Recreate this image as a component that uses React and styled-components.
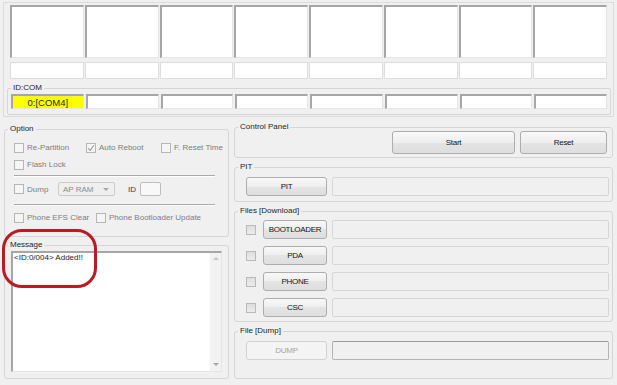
import React from "react";
import styled, { createGlobalStyle } from "styled-components";

const GlobalStyle = createGlobalStyle`
  html, body {
    margin: 0;
    padding: 0;
    background: #f0f0f0;
  }
  body {
    font-family: "Liberation Sans", Arial, sans-serif;
    font-size: 8px;
    color: #1b1b1b;
  }
`;

const slots = [0, 1, 2, 3, 4, 5, 6, 7];

const files = ["BOOTLOADER", "PDA", "PHONE", "CSC"];

const App = () => {
  return (
    <Window>
      <GlobalStyle />
      <DevicePanel>
        <LargeRow>
          {slots.map((i) => (
            <LargeBox key={i} />
          ))}
        </LargeRow>
        <SmallRow>
          {slots.map((i) => (
            <SmallBox key={i} />
          ))}
        </SmallRow>
        <ComGroup>
          <Caption>ID:COM</Caption>
          <ComRow>
            {slots.map((i) => (
              <ComBox key={i} $active={i === 0}>
                {i === 0 ? "0:[COM4]" : ""}
              </ComBox>
            ))}
          </ComRow>
        </ComGroup>
      </DevicePanel>

      <Main>
        <Column $top={7}>
          <Group>
            <Caption>Option</Caption>
            <OptionBody>
              <OptionGrid>
                <CheckItem>
                  <CheckBox />
                  Re-Partition
                </CheckItem>
                <CheckItem>
                  <CheckBox>
                    <svg width="8" height="8" viewBox="0 0 8 8">
                      <path
                        d="M1.2 4.3 L3.1 6.4 L6.9 1.2"
                        stroke="#9c9c9c"
                        strokeWidth="1.1"
                        fill="none"
                      />
                    </svg>
                  </CheckBox>
                  Auto Reboot
                </CheckItem>
                <CheckItem>
                  <CheckBox />
                  F. Reset Time
                </CheckItem>
                <CheckItem>
                  <CheckBox />
                  Flash Lock
                </CheckItem>
              </OptionGrid>
              <Separator $mt={4} />
              <DumpRow>
                <CheckItem $w={44}>
                  <CheckBox />
                  Dump
                </CheckItem>
                <Select>
                  AP RAM
                  <Arrow $dir="down" />
                </Select>
                <IdLabel>ID</IdLabel>
                <IdBox />
              </DumpRow>
              <Separator $mt={8} />
              <PhoneRow>
                <CheckItem $w={82}>
                  <CheckBox />
                  Phone EFS Clear
                </CheckItem>
                <CheckItem>
                  <CheckBox />
                  Phone Bootloader Update
                </CheckItem>
              </PhoneRow>
            </OptionBody>
          </Group>

          <Group $mt={3}>
            <Caption>Message</Caption>
            <GroupBody $pad="1px 6px 6px 6px">
              <MessageBox>
                <MessageText>&lt;ID:0/004&gt; Added!!</MessageText>
                <ScrollTrack>
                  <Arrow $dir="up" />
                  <Arrow $dir="down" />
                </ScrollTrack>
              </MessageBox>
            </GroupBody>
          </Group>
        </Column>

        <Column $top={5}>
          <Group>
            <Caption>Control Panel</Caption>
            <ControlBody>
              <Button $w={123} $h={23}>
                Start
              </Button>
              <Button $w={87} $h={23}>
                Reset
              </Button>
            </ControlBody>
          </Group>

          <Group $mt={4}>
            <Caption>PIT</Caption>
            <GroupBody $pad="5px 3px 5px 11px">
              <FileRow>
                <Button $w={81}>PIT</Button>
                <PathField />
              </FileRow>
            </GroupBody>
          </Group>

          <Group $mt={4}>
            <Caption>Files [Download]</Caption>
            <FileList>
              {files.map((name) => (
                <FileRow key={name}>
                  <FileCheck />
                  <Button $w={64}>{name}</Button>
                  <PathField />
                </FileRow>
              ))}
            </FileList>
          </Group>

          <Group $mt={4}>
            <Caption>File [Dump]</Caption>
            <GroupBody $pad="5px 3px 18px 11px">
              <FileRow>
                <Button $w={81} disabled>
                  DUMP
                </Button>
                <PathField $sunken />
              </FileRow>
            </GroupBody>
          </Group>
        </Column>
      </Main>

      <Highlight />
    </Window>
  );
};

export default App;

const Window = styled.div`
  position: relative;
  width: 617px;
  height: 385px;
  box-sizing: border-box;
  padding: 2px 3px 0;
  background: #f0f0f0;
  overflow: hidden;
`;

const DevicePanel = styled.div`
  border: 1px solid #dcdcdc;
  padding: 2px 6px 1px;
`;

const LargeRow = styled.div`
  display: grid;
  grid-template-columns: repeat(8, 1fr);
  column-gap: 1px;
  height: 53px;
`;

const sunken = `
  border-style: solid;
  border-width: 2px 1px 1px 2px;
  border-color: #a6a6a6 #e6e6e6 #e6e6e6 #a6a6a6;
  background: #fff;
`;

const LargeBox = styled.div`
  ${sunken}
`;

const SmallRow = styled.div`
  display: grid;
  grid-template-columns: repeat(8, 1fr);
  column-gap: 1px;
  height: 17px;
  margin-top: 4px;
`;

const SmallBox = styled.div`
  border: 1px solid #dedede;
  background: #fff;
`;

const Group = styled.fieldset`
  margin: ${(p) => p.$mt || 0}px 0 0;
  padding: 0;
  min-width: 0;
  border: 1px solid #d5d5d5;
  border-radius: 3px;
`;

const ComGroup = styled(Group)`
  margin: 4px -4px 0 -3px;
  border-radius: 2px;
`;

const Caption = styled.legend`
  margin-left: 3px;
  padding: 0 2px;
  font-size: 8px;
  line-height: 10px;
  color: #1e1e1e;
`;

const ComRow = styled.div`
  display: grid;
  grid-template-columns: repeat(8, 1fr);
  column-gap: 2px;
  padding: 1px 3px 5px;
`;

const ComBox = styled.div`
  ${sunken}
  height: 15px;
  box-sizing: border-box;
  background: ${(p) => (p.$active ? "#ffff00" : "#fff")};
  display: flex;
  align-items: center;
  justify-content: center;
  font-size: 9.5px;
  color: #2a2a1a;
`;

const Main = styled.div`
  display: grid;
  grid-template-columns: 225px 379px;
  column-gap: 5px;
  margin-left: 1px;
  align-items: start;
`;

const Column = styled.div`
  display: flex;
  flex-direction: column;
  padding-top: ${(p) => p.$top}px;
`;

const GroupBody = styled.div`
  padding: ${(p) => p.$pad};
`;

const OptionBody = styled.div`
  padding: 7px 4px 12px 9px;
`;

const OptionGrid = styled.div`
  display: grid;
  grid-template-columns: 72px 75px auto;
  grid-auto-rows: 13px;
  row-gap: 4px;
`;

const CheckItem = styled.label`
  display: flex;
  align-items: center;
  gap: 3px;
  width: ${(p) => (p.$w ? `${p.$w}px` : "auto")};
  color: #7d7d7d;
  white-space: nowrap;
`;

const CheckBox = styled.span`
  display: flex;
  align-items: center;
  justify-content: center;
  width: 10px;
  height: 10px;
  box-sizing: border-box;
  border: 1px solid #b5b5b5;
  background: #f5f5f5;
  flex-shrink: 0;
`;

const Separator = styled.div`
  margin: ${(p) => p.$mt}px 9px 0 0;
  border-top: 1px solid #ababab;
  border-bottom: 1px solid #fff;
`;

const DumpRow = styled.div`
  display: flex;
  align-items: center;
  height: 14px;
  margin-top: 5px;
`;

const Select = styled.div`
  display: flex;
  align-items: center;
  justify-content: space-between;
  width: 57px;
  height: 14px;
  box-sizing: border-box;
  padding: 0 5px 0 4px;
  border: 1px solid #cbcbcb;
  border-radius: 2px;
  background: #efefef;
  color: #8c8c8c;
`;

const IdLabel = styled.span`
  margin-left: 13px;
  color: #3a3a3a;
`;

const IdBox = styled.div`
  width: 21px;
  height: 14px;
  box-sizing: border-box;
  margin-left: 4px;
  border: 1px solid #bdbdbd;
  border-radius: 2px;
  background: #f8f8f8;
`;

const PhoneRow = styled.div`
  display: flex;
  align-items: center;
  height: 13px;
  margin-top: 5px;
`;

const MessageBox = styled.div`
  display: flex;
  height: 121px;
  box-sizing: border-box;
  ${sunken}
`;

const MessageText = styled.div`
  flex: 1;
  padding: 0 1px;
  line-height: 10px;
  color: #1e1e1e;
`;

const ScrollTrack = styled.div`
  width: 11px;
  display: flex;
  flex-direction: column;
  align-items: center;
  justify-content: space-between;
  padding: 4px 0 5px;
  background: #f2f2f2;
`;

const Arrow = styled.span`
  width: 0;
  height: 0;
  border-left: 3px solid transparent;
  border-right: 3px solid transparent;
  ${(p) =>
    p.$dir === "up"
      ? "border-bottom: 3px solid #c4c4c4;"
      : "border-top: 3px solid #a8a8a8;"}
`;

const ControlBody = styled.div`
  display: flex;
  justify-content: flex-end;
  gap: 5px;
  margin-top: -1px;
  padding: 0 5px 3px 11px;
`;

const Button = styled.button`
  width: ${(p) => p.$w}px;
  height: ${(p) => p.$h || 19}px;
  flex-shrink: 0;
  padding: 0;
  font-family: inherit;
  font-size: 8px;
  letter-spacing: -0.3px;
  color: #151515;
  border: 1px solid #adadad;
  border-radius: 3px;
  background: linear-gradient(#f8f8f8, #eeeeee 50%, #e4e4e4 50%, #dedede);

  &:disabled {
    color: #a4a4a4;
    border-color: #d2d2d2;
    background: #f4f4f4;
  }
`;

const FileList = styled.div`
  display: flex;
  flex-direction: column;
  gap: 7px;
  padding: 4px 3px 4px 11px;
`;

const FileRow = styled.div`
  display: flex;
  align-items: center;
  gap: 5px;
  height: 19px;
`;

const FileCheck = styled.span`
  width: 10px;
  height: 10px;
  box-sizing: border-box;
  margin-right: 2px;
  border: 1px solid #b9b9b9;
  background: linear-gradient(#dedede, #ececec);
`;

const PathField = styled.div`
  flex: 1;
  height: 19px;
  box-sizing: border-box;
  border: 1px solid ${(p) => (p.$sunken ? "#b4b4b4" : "#d6d6d6")};
  border-top-color: ${(p) => (p.$sunken ? "#999" : "#d6d6d6")};
  border-radius: 2px;
  background: #f0f0f0;
`;

const Highlight = styled.div`
  position: absolute;
  left: 2px;
  top: 229px;
  width: 95px;
  height: 59px;
  box-sizing: border-box;
  border: 3px solid #b81c22;
  border-radius: 20px;
  pointer-events: none;
`;
